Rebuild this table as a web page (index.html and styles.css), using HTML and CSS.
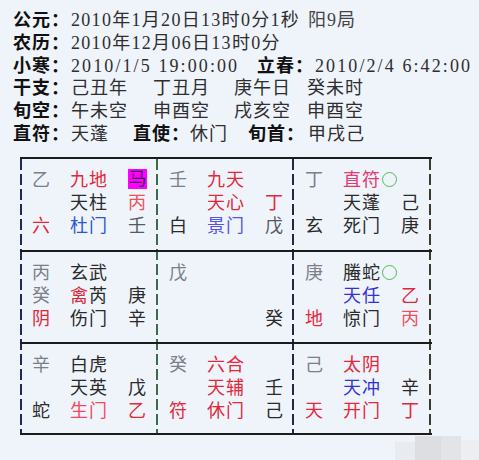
FILE: index.html
```html
<!DOCTYPE html>
<html lang="zh-CN">
<head>
<meta charset="utf-8">
<title>奇门遁甲排盘</title>
<link rel="stylesheet" href="styles.css">
</head>
<body>
<div class="head">
  <div class="hl"><span class="lb">公元：</span><span class="v w237 sp1">2010年1月20日13时0分1秒</span><span class="v g">阳9局</span></div>
  <div class="hl"><span class="lb">农历：</span><span class="v sp1">2010年12月06日13时0分</span></div>
  <div class="hl"><span class="lb">小寒：</span><span class="v w186 sp2">2010/1/5 19:00:00</span><span class="lb">立春：</span><span class="v sp2">2010/2/4 6:42:00</span></div>
  <div class="hl"><span class="lb">干支：</span><span class="v w82">己丑年</span><span class="v w81">丁丑月</span><span class="v w73">庚午日</span><span class="v">癸未时</span></div>
  <div class="hl"><span class="lb">旬空：</span><span class="v w82">午未空</span><span class="v w81">申酉空</span><span class="v w73">戌亥空</span><span class="v">申酉空</span></div>
  <div class="hl"><span class="lb">直符：</span><span class="v w62">天蓬</span><span class="lb w57">直使：</span><span class="v w58">休门</span><span class="lb w60">旬首：</span><span class="v">甲戌己</span></div>
</div>

<div class="pan">
  <div class="cell r1">
    <div class="ln"><span class="st">乙</span><span class="red">九地</span><span><span class="ma">马</span></span></div>
    <div class="ln"><span></span><span class="dk">天柱</span><span class="sal">丙</span></div>
    <div class="ln"><span class="red">六</span><span class="blue">杜门</span><span class="mid">壬</span></div>
  </div>
  <div class="cell r1">
    <div class="ln"><span class="st">壬</span><span class="red">九天</span><span></span></div>
    <div class="ln"><span></span><span class="red">天心</span><span class="red">丁</span></div>
    <div class="ln"><span class="dk">白</span><span class="vio">景门</span><span class="mid">戊</span></div>
  </div>
  <div class="cell r1">
    <div class="ln"><span class="st">丁</span><span><span class="pink">直符</span><span class="ring"></span></span><span></span></div>
    <div class="ln"><span></span><span class="dk">天蓬</span><span class="dk">己</span></div>
    <div class="ln"><span class="dk">玄</span><span class="dk">死门</span><span class="dk">庚</span></div>
  </div>

  <div class="cell r2">
    <div class="ln"><span class="st">丙</span><span class="dk">玄武</span><span></span></div>
    <div class="ln"><span class="st">癸</span><span><span class="red">禽</span><span class="dk">芮</span></span><span class="dk">庚</span></div>
    <div class="ln"><span class="red">阴</span><span class="dk">伤门</span><span class="dk">辛</span></div>
  </div>
  <div class="cell r2">
    <div class="ln"><span class="st">戊</span><span></span><span></span></div>
    <div class="ln"><span></span><span></span><span></span></div>
    <div class="ln"><span></span><span></span><span class="dk">癸</span></div>
  </div>
  <div class="cell r2">
    <div class="ln"><span class="st">庚</span><span><span class="dk">螣蛇</span><span class="ring"></span></span><span></span></div>
    <div class="ln"><span></span><span class="blue2">天任</span><span class="red">乙</span></div>
    <div class="ln"><span class="red">地</span><span class="dk">惊门</span><span class="sal">丙</span></div>
  </div>

  <div class="cell r3">
    <div class="ln"><span class="st">辛</span><span class="dk">白虎</span><span></span></div>
    <div class="ln"><span></span><span class="dk">天英</span><span class="dk">戊</span></div>
    <div class="ln"><span class="dk">蛇</span><span class="red2">生门</span><span class="red">乙</span></div>
  </div>
  <div class="cell r3">
    <div class="ln"><span class="st">癸</span><span class="red">六合</span><span></span></div>
    <div class="ln"><span></span><span class="red">天辅</span><span class="dk">壬</span></div>
    <div class="ln"><span class="red">符</span><span class="red">休门</span><span class="dk">己</span></div>
  </div>
  <div class="cell r3">
    <div class="ln"><span class="st">己</span><span class="red">太阴</span><span></span></div>
    <div class="ln"><span></span><span class="blue2">天冲</span><span class="dk">辛</span></div>
    <div class="ln"><span class="red">天</span><span class="red">开门</span><span class="red">丁</span></div>
  </div>
</div>

<div class="mosaic">
  <span class="mb m1"></span><span class="mb m2"></span><span class="mb m3"></span><span class="mb m4"></span>
</div>
</body>
</html>
```

FILE: styles.css
```css
html, body {
  margin: 0;
  padding: 0;
  background: #eff3fa;
}
body {
  width: 479px;
  height: 460px;
  position: relative;
  overflow: hidden;
  font-family: "Liberation Serif", "Noto Sans CJK SC", serif;
  font-size: 18px;
  letter-spacing: 1px;
  color: #333;
}
.head {
  padding: 9px 0 0 13px;
}
.hl {
  display: flex;
  height: 22.8px;
  line-height: 22.8px;
  white-space: pre;
}
.lb {
  font-weight: bold;
  color: #111;
  width: 58px;
  flex: none;
}
.v { flex: none; color: #2e2e2e; }
.v.g { color: #444; }
.sp1 { letter-spacing: 1.3px; }
.sp2 { letter-spacing: 2.1px; }
.w237 { width: 237px; }
.w186 { width: 186px; }
.w82 { width: 82px; }
.w81 { width: 81px; }
.w73 { width: 73px; }
.w62 { width: 62px; }
.w57 { width: 57px; }
.w58 { width: 58px; }
.w60 { width: 60px; }

.pan {
  margin: 11px 0 0 20px;
  width: 412px;
  display: grid;
  grid-template-columns: 137px 136px 139px;
  border-top: 2px solid #1c1c1c;
  border-bottom: 2px solid #1c1c1c;
  background:
    repeating-linear-gradient(to bottom, #1d2b55 0 11px, transparent 11px 15px) 0 0 / 2px 100% no-repeat,
    repeating-linear-gradient(to bottom, #3e6a4c 0 11px, transparent 11px 15px) 136px 0 / 2px 100% no-repeat,
    repeating-linear-gradient(to bottom, #1e2a44 0 11px, transparent 11px 15px) 272px 0 / 2px 100% no-repeat,
    repeating-linear-gradient(to bottom, #3a3a2a 0 11px, transparent 11px 15px) 409px 0 / 2px 100% no-repeat;
}
.cell {
  padding: 10px 0 0 12px;
  box-sizing: border-box;
}
.r1 { height: 91px; }
.r2 { height: 92px; border-top: 2px solid #1c1c1c; }
.r3 { height: 91px; border-top: 2px solid #1c1c1c; }
.ln {
  display: grid;
  grid-template-columns: 38px 58px 24px;
  height: 23px;
  line-height: 23px;
  white-space: nowrap;
}
.st { color: #7a7f88; }
.dk { color: #2a2a2a; }
.mid { color: #555a60; }
.red { color: #e2283a; }
.red2 { color: #f04a5e; }
.sal { color: #e85458; }
.pink { color: #e23a72; }
.blue { color: #2a56d6; }
.blue2 { color: #3232d2; }
.vio { color: #5656dc; }
.ring {
  display: inline-block;
  width: 13px;
  height: 13px;
  border: 1.5px solid #4cbf4c;
  border-radius: 50%;
  margin-left: 1px;
  vertical-align: -1px;
}
.ma {
  display: inline-block;
  background: #ff00ff;
  color: #3a0a5a;
  width: 19px;
  height: 20px;
  line-height: 20px;
  letter-spacing: 0;
  text-align: center;
  vertical-align: 1px;
}

.mosaic {
  position: absolute;
  left: 395px;
  top: 436px;
  width: 84px;
  height: 24px;
}
.mb { position: absolute; display: block; }
.m1 { left: 0; top: 6px; width: 20px; height: 18px; background: #e8ebef; }
.m2 { left: 20px; top: 0; width: 26px; height: 24px; background: #dcdee2; }
.m3 { left: 46px; top: 0; width: 20px; height: 24px; background: #e2e4e8; }
.m4 { left: 66px; top: 4px; width: 18px; height: 20px; background: #eceef1; }
```
